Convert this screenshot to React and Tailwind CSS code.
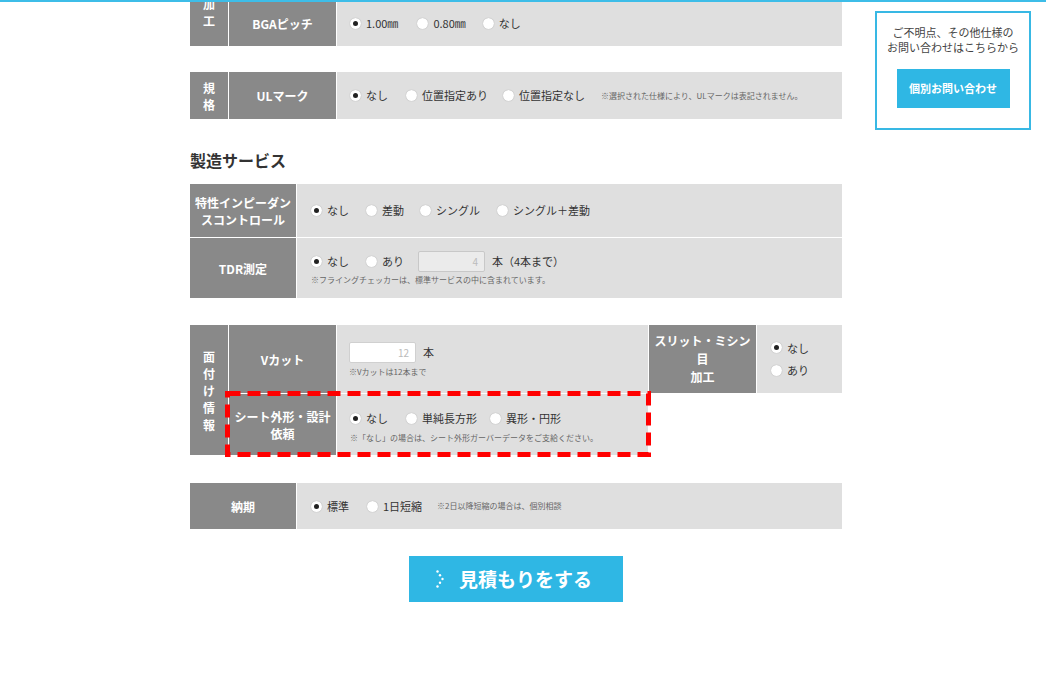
import React from "react";

const Radio = ({ label, checked, className = "" }) => (
  <label className={`inline-flex items-center gap-[5px] ${className}`}>
    <span className="w-[11px] h-[11px] rounded-full bg-white shadow-[0_0_1px_rgba(0,0,0,0.35)] flex items-center justify-center">
      {checked && <span className="w-[5px] h-[5px] rounded-full bg-[#222]" />}
    </span>
    <span>{label}</span>
  </label>
);

const Head = ({ children, className = "" }) => (
  <div
    className={`bg-[#898989] text-white font-bold text-[12px] leading-[17px] flex items-center justify-center text-center ${className}`}
  >
    {children}
  </div>
);

const Cell = ({ children, className = "" }) => (
  <div className={`bg-[#dfdfdf] text-[#333] text-[11px] ${className}`}>{children}</div>
);

const Note = ({ children, className = "" }) => (
  <p className={`text-[8px] text-[#666] leading-[10px] ${className}`}>{children}</p>
);

const Dots = () => (
  <svg width="8" height="18" viewBox="0 0 8 18" fill="white">
    <circle cx="1.5" cy="1.5" r="1.2" />
    <circle cx="4" cy="5.2" r="1.2" />
    <circle cx="6.5" cy="9" r="1.2" />
    <circle cx="4" cy="12.8" r="1.2" />
    <circle cx="1.5" cy="16.5" r="1.2" />
  </svg>
);

export default function App() {
  return (
    <div
      className="relative h-[674px] overflow-hidden bg-white"
      style={{ fontFamily: '"Noto Sans CJK JP", "Noto Sans", sans-serif' }}
    >
      {/* header line */}
      <div className="absolute top-0 left-0 w-full h-[2px] bg-[#3dbde8] z-10" />

      <div className="flex items-start gap-[33px] pl-[190px]">
        <div className="w-[652px] flex flex-col">
          {/* BGA */}
          <div className="-mt-[22px] grid grid-cols-[38px_107px_1fr] grid-rows-[21px_46px] gap-px bg-white">
            <Head className="row-span-2 leading-[17px]">
              加<br />工
            </Head>
            <Head>&nbsp;</Head>
            <Cell />
            <Head>BGAピッチ</Head>
            <Cell className="flex items-center pl-[13px]">
              <Radio label="1.00㎜" checked className="mr-[19px]" />
              <Radio label="0.80㎜" className="mr-[17px]" />
              <Radio label="なし" />
            </Cell>
          </div>

          {/* UL */}
          <div className="mt-[26px] grid grid-cols-[38px_107px_1fr] h-[47px] gap-px bg-white">
            <Head className="leading-[16px]">
              規<br />格
            </Head>
            <Head>ULマーク</Head>
            <Cell className="flex items-center pl-[13px]">
              <Radio label="なし" checked className="mr-[18px]" />
              <Radio label="位置指定あり" className="mr-[15px]" />
              <Radio label="位置指定なし" className="mr-[16px]" />
              <Note>※選択された仕様により、ULマークは表記されません。</Note>
            </Cell>
          </div>

          <h2 className="mt-[31px] text-[16px] leading-[20px] font-bold text-[#333]">製造サービス</h2>

          {/* 製造サービス */}
          <div className="mt-[14px] grid grid-cols-[106px_1fr] grid-rows-[53px_60px] gap-px bg-white">
            <Head>
              特性インピーダン
              <br />
              スコントロール
            </Head>
            <Cell className="flex items-center pl-[14px]">
              <Radio label="なし" checked className="mr-[17px]" />
              <Radio label="差動" className="mr-[16px]" />
              <Radio label="シングル" className="mr-[17px]" />
              <Radio label="シングル＋差動" />
            </Cell>
            <Head>TDR測定</Head>
            <Cell className="flex flex-col justify-center pl-[14px]">
              <div className="flex items-center">
                <Radio label="なし" checked className="mr-[17px]" />
                <Radio label="あり" className="mr-[14px]" />
                <div className="w-[67px] h-[21px] bg-[#ebebeb] border border-[#c8c8c8] rounded-[2px] text-right pr-[6px] text-[10px] leading-[19px] text-[#bbb]">
                  4
                </div>
                <span className="ml-[7px]">本（4本まで）</span>
              </div>
              <Note className="mt-[3px]">※フライングチェッカーは、標準サービスの中に含まれています。</Note>
            </Cell>
          </div>

          {/* 面付け情報 */}
          <div className="relative mt-[27px]">
            <div className="grid grid-cols-[38px_107px_311px_107px_1fr] grid-rows-[68px_61px] gap-px bg-white">
              <Head className="row-span-2 leading-[14px]">
                面<br />付<br />け<br />情<br />報
              </Head>
              <Head>Vカット</Head>
              <Cell className="flex flex-col justify-center pl-[12px]">
                <div className="flex items-center">
                  <div className="w-[67px] h-[21px] bg-white border border-[#d0d0d0] rounded-[2px] text-right pr-[6px] text-[10px] leading-[19px] text-[#bbb]">
                    12
                  </div>
                  <span className="ml-[7px]">本</span>
                </div>
                <Note className="mt-[4px]">※Vカットは12本まで</Note>
              </Cell>
              <Head className="whitespace-nowrap leading-[18px]">
                スリット・ミシン
                <br />
                目
                <br />
                加工
              </Head>
              <Cell className="flex flex-col justify-center gap-[6px] pl-[14px]">
                <Radio label="なし" checked />
                <Radio label="あり" />
              </Cell>
              <Head className="whitespace-nowrap">
                シート外形・設計
                <br />
                依頼
              </Head>
              <Cell className="flex flex-col justify-center pl-[13px] pt-[4px]">
                <div className="flex items-center">
                  <Radio label="なし" checked className="mr-[18px]" />
                  <Radio label="単純長方形" className="mr-[13px]" />
                  <Radio label="異形・円形" />
                </div>
                <Note className="mt-[7px]">※「なし」の場合は、シート外形ガーバーデータをご支給ください。</Note>
              </Cell>
            </div>
            {/* highlight */}
            <svg
              className="absolute left-[35px] top-[66px] pointer-events-none"
              width="426"
              height="66"
              viewBox="0 0 426 66"
            >
              <rect
                x="2.5"
                y="2.5"
                width="421"
                height="61"
                fill="none"
                stroke="#ff0000"
                strokeWidth="5"
                strokeDasharray="13 7"
              />
            </svg>
          </div>

          {/* 納期 */}
          <div className="mt-[28px] grid grid-cols-[106px_1fr] h-[46px] gap-px bg-white">
            <Head>納期</Head>
            <Cell className="flex items-center pl-[14px]">
              <Radio label="標準" checked className="mr-[18px]" />
              <Radio label="1日短縮" className="mr-[15px]" />
              <Note>※2日以降短縮の場合は、個別相談</Note>
            </Cell>
          </div>

          <div className="mt-[27px] flex justify-center">
            <button className="w-[214px] h-[46px] bg-[#2fb7e4] text-white font-bold text-[19px] flex items-center justify-center gap-[15px] pr-[4px]">
              <Dots />
              見積もりをする
            </button>
          </div>
        </div>

        {/* sidebar */}
        <div className="mt-[11px] w-[156px] h-[119px] border-2 border-[#38b8e4] flex flex-col items-center pt-[12px]">
          <p className="text-[11px] leading-[15px] text-[#444] text-center">
            ご不明点、その他仕様の
            <br />
            お問い合わせはこちらから
          </p>
          <button className="mt-[14px] w-[113px] h-[39px] bg-[#2fb7e4] text-white font-bold text-[11px]">
            個別お問い合わせ
          </button>
        </div>
      </div>
    </div>
  );
}
